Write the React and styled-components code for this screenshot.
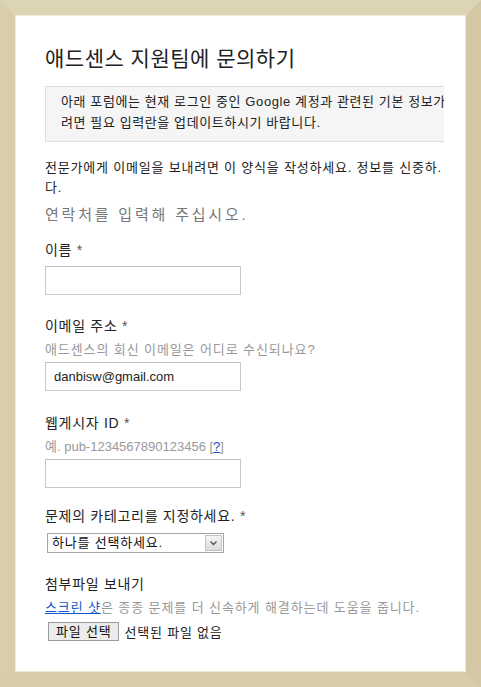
import React from "react";
import styled, { createGlobalStyle } from "styled-components";

const GlobalStyle = createGlobalStyle`
  html, body {
    margin: 0;
    padding: 0;
    background: #d9cfae;
  }
  body {
    font-family: "Liberation Sans", Arial, "Noto Sans CJK KR", sans-serif;
  }
`;

const Frame = styled.div`
  width: 481px;
  height: 687px;
  box-sizing: border-box;
  border-style: solid;
  border-width: 15px;
  border-top-color: #ddd4b5;
  border-left-color: #d8ceab;
  border-right-color: #d3c8a3;
  border-bottom-color: #d6cca8;
  background: #fff;
`;

const Panel = styled.div`
  height: 100%;
  box-sizing: border-box;
  padding: 30px 22px 0 30px;
  box-shadow: inset 0 0 0 1px #eee9d8;
`;

const Content = styled.div`
  overflow: hidden;
  color: #222;
`;

const Title = styled.h1`
  margin: 0 0 13px 0;
  font-size: 21px;
  font-weight: normal;
  line-height: 28px;
  color: #222;
  letter-spacing: 0.5px;
`;

const Notice = styled.div`
  width: 440px;
  box-sizing: border-box;
  background: #f5f5f5;
  border: 1px solid #dcdcdc;
  padding: 4px 15px 8px 15px;
  font-size: 13px;
  line-height: 21px;
  letter-spacing: 0.6px;
  white-space: nowrap;
  color: #222;
`;

const Intro = styled.p`
  margin: 16px 0 0 0;
  font-size: 13px;
  line-height: 20px;
  letter-spacing: 0.8px;
  white-space: nowrap;
`;

const Section = styled.h2`
  margin: 6px 0 0 0;
  font-size: 15px;
  font-weight: normal;
  line-height: 22px;
  letter-spacing: 2.8px;
  color: #777;
`;

const Field = styled.div`
  margin-top: ${(p) => p.$top}px;
`;

const Label = styled.div`
  font-size: 14px;
  line-height: 18px;
  letter-spacing: 0.7px;
  color: #222;
`;

const Star = styled.span`
  color: #555;
`;

const Hint = styled.div`
  margin-top: 6px;
  font-size: 13px;
  line-height: 18px;
  letter-spacing: ${(p) => (p.$latin ? "0" : "0.9px")};
  color: #999;
`;

const HelpLink = styled.a`
  color: #15c;
  text-decoration: underline;
`;

const Input = styled.input`
  display: block;
  margin-top: ${(p) => p.$top}px;
  width: 196px;
  height: 29px;
  box-sizing: border-box;
  border: 1px solid #c8c8c8;
  border-top-color: #c0c0c0;
  padding: 0 8px;
  font-family: "Liberation Sans", Arial, sans-serif;
  font-size: 13px;
  color: #222;
  outline: none;
`;

const SelectBox = styled.div`
  margin: 8px 0 0 2px;
  width: 177px;
  height: 20px;
  box-sizing: border-box;
  border: 1px solid #a5a5a5;
  display: flex;
  align-items: stretch;
  background: #fff;
`;

const SelectText = styled.div`
  flex: 1;
  padding-left: 4px;
  font-size: 13px;
  line-height: 18px;
  letter-spacing: 0.8px;
  color: #111;
`;

const Arrow = styled.div`
  width: 15px;
  margin: 1px;
  border: 1px solid #c3c3c3;
  background: linear-gradient(#f4f4f4, #dcdcdc);
  display: flex;
  align-items: center;
  justify-content: center;
`;

const LinkText = styled.a`
  color: #15c;
  text-decoration: underline;
`;

const FileRow = styled.div`
  margin: 5px 0 0 3px;
  display: flex;
  align-items: center;
  gap: 5px;
  font-size: 13px;
  letter-spacing: 0.8px;
  color: #222;
`;

const FileButton = styled.button`
  height: 19px;
  padding: 0 7px;
  box-sizing: border-box;
  border: 1px solid #9a9a9a;
  background: #ececec;
  font-family: inherit;
  font-size: 13px;
  line-height: 15px;
  letter-spacing: 0.8px;
  color: #111;
`;

const App = () => {
  return (
    <>
      <GlobalStyle />
      <Frame>
        <Panel>
          <Content>
            <Title>애드센스 지원팀에 문의하기</Title>
            <Notice>
              아래 포럼에는 현재 로그인 중인 Google 계정과 관련된 기본 정보가 입력되어 있습니다. 변경하
              <br />
              려면 필요 입력란을 업데이트하시기 바랍니다.
            </Notice>
            <Intro>
              전문가에게 이메일을 보내려면 이 양식을 작성하세요. 정보를 신중하.
              <br />
              다.
            </Intro>
            <Section>연락처를 입력해 주십시오.</Section>

            <Field $top={15}>
              <Label>
                이름 <Star>*</Star>
              </Label>
              <Input type="text" $top={7} />
            </Field>

            <Field $top={22}>
              <Label>
                이메일 주소 <Star>*</Star>
              </Label>
              <Hint>애드센스의 회신 이메일은 어디로 수신되나요?</Hint>
              <Input type="text" defaultValue="danbisw@gmail.com" $top={3} />
            </Field>

            <Field $top={23}>
              <Label>
                웹게시자 ID <Star>*</Star>
              </Label>
              <Hint $latin>
                예. pub-1234567890123456 [<HelpLink href="#">?</HelpLink>]
              </Hint>
              <Input type="text" $top={3} />
            </Field>

            <Field $top={19}>
              <Label>
                문제의 카테고리를 지정하세요. <Star>*</Star>
              </Label>
              <SelectBox>
                <SelectText>하나를 선택하세요.</SelectText>
                <Arrow>
                  <svg width="7" height="5" viewBox="0 0 7 5">
                    <path d="M0.5 0.5 L3.5 3.5 L6.5 0.5" fill="none" stroke="#555" strokeWidth="1.4" />
                  </svg>
                </Arrow>
              </SelectBox>
            </Field>

            <Field $top={22}>
              <Label>첨부파일 보내기</Label>
              <Hint>
                <LinkText href="#">스크린 샷</LinkText>은 종종 문제를 더 신속하게 해결하는데 도움을 줍니다.
              </Hint>
              <FileRow>
                <FileButton>파일 선택</FileButton>
                <span>선택된 파일 없음</span>
              </FileRow>
            </Field>
          </Content>
        </Panel>
      </Frame>
    </>
  );
};

export default App;
